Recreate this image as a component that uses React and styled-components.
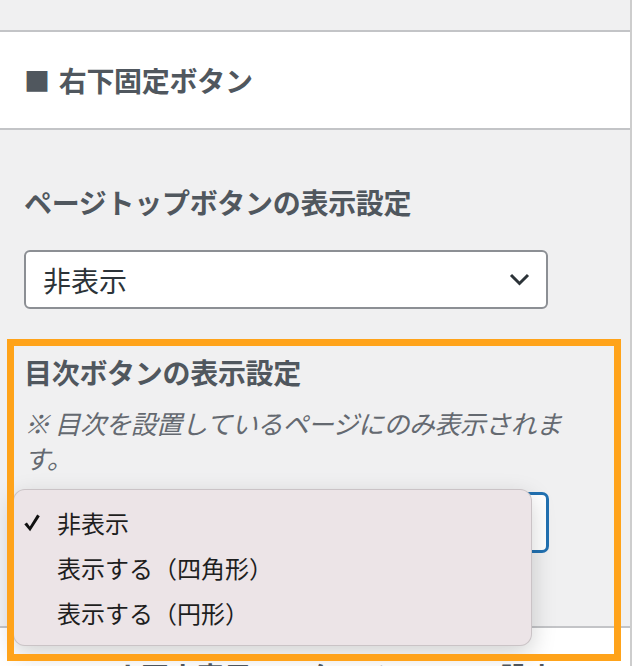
import styled, { createGlobalStyle, css } from 'styled-components';

const GlobalStyle = createGlobalStyle`
  html, body {
    margin: 0;
    padding: 0;
    background: #fff;
  }
  body {
    font-family: "Noto Sans CJK JP", "Noto Sans", sans-serif;
    -webkit-font-smoothing: antialiased;
  }
`;

const Panel = styled.div`
  width: 630px;
  height: 666px;
  overflow: hidden;
  background: #f0f0f1;
  border-right: 2px solid #cdcdcd;
`;

const TopGap = styled.div`
  height: 30px;
`;

const SectionTitle = styled.h3`
  margin: 0;
  height: 96px;
  display: flex;
  align-items: center;
  gap: 9px;
  padding: 0 24px;
  background: #fff;
  border-top: 2px solid #c3c4c7;
  border-bottom: 2px solid #c3c4c7;
  font-size: 28px;
  font-weight: 700;
  letter-spacing: -0.3px;
  color: #50575e;
  white-space: nowrap;
`;

const Marker = styled.span`
  font-size: 26px;
  line-height: 1;
`;

const Controls = styled.div`
  padding: 52px 24px 74px;
  display: flex;
  flex-direction: column;
  gap: 43px;
`;

const Control = styled.div`
  position: relative;
  display: flex;
  flex-direction: column;
  align-items: flex-start;

  ${(p) =>
    p.$highlight &&
    css`
      &::after {
        content: '';
        position: absolute;
        left: -17px;
        right: -15px;
        top: -13px;
        bottom: -109px;
        border: 7px solid #ffa31a;
        z-index: 3;
        pointer-events: none;
      }
    `}
`;

const Label = styled.div`
  font-size: 28px;
  font-weight: 700;
  letter-spacing: -0.3px;
  line-height: 40px;
  color: #50575e;
  margin-bottom: ${(p) => (p.$tight ? '0' : '28px')};
`;

const Note = styled.p`
  margin: 13px 0 18px;
  max-width: 560px;
  font-size: 26px;
  letter-spacing: -0.6px;
  line-height: 35px;
  font-style: italic;
  color: #646970;
`;

const SelectWrap = styled.div`
  position: relative;
  width: 524px;
`;

const SelectBox = styled.div`
  box-sizing: border-box;
  height: 59px;
  display: flex;
  align-items: center;
  justify-content: space-between;
  padding: 0 16px 0 17px;
  background: #fff;
  border: 2px solid ${(p) => (p.$focused ? '#2271b1' : '#8c8f94')};
  box-shadow: ${(p) => (p.$focused ? '0 0 0 1px #2271b1' : 'none')};
  border-radius: 6px;
  font-size: 28px;
  color: #2c3338;
`;

const Menu = styled.div`
  position: absolute;
  left: -11px;
  top: -4px;
  width: 519px;
  box-sizing: border-box;
  padding: 10px 0 10px;
  background: #ece4e7;
  border: 1px solid rgba(0, 0, 0, 0.14);
  border-radius: 12px;
  box-shadow: 0 8px 24px rgba(0, 0, 0, 0.18);
  z-index: 2;
`;

const Option = styled.div`
  display: flex;
  align-items: center;
  height: 45px;
  padding-left: 10px;
  font-size: 24px;
  color: #1e1e1e;
`;

const CheckSlot = styled.span`
  width: 33px;
  display: flex;
  align-items: center;
`;

const Chevron = () => (
  <svg width="21" height="13" viewBox="0 0 21 13">
    <polyline points="2,2 10.5,10.5 19,2" fill="none" stroke="#2c3338" strokeWidth="3" />
  </svg>
);

const CheckMark = () => (
  <svg width="16" height="18" viewBox="0 0 16 18">
    <path d="M0.3 10.2 L2.9 8.4 L5.8 12.4 L13.2 0.6 L15.8 2.2 L6.1 17.2 Z" fill="#111" />
  </svg>
);

const options = ['非表示', '表示する（四角形）', '表示する（円形）'];

const Select = ({ value, focused, open }) => (
  <SelectWrap>
    <SelectBox $focused={focused}>
      <span>{value}</span>
      <Chevron />
    </SelectBox>
    {open && (
      <Menu>
        {options.map((o) => (
          <Option key={o}>
            <CheckSlot>{o === value && <CheckMark />}</CheckSlot>
            {o}
          </Option>
        ))}
      </Menu>
    )}
  </SelectWrap>
);

const App = () => (
  <>
    <GlobalStyle />
    <Panel>
      <TopGap />
      <SectionTitle>
        <Marker>■</Marker>
        右下固定ボタン
      </SectionTitle>
      <Controls>
        <Control>
          <Label>ページトップボタンの表示設定</Label>
          <Select value="非表示" />
        </Control>
        <Control $highlight>
          <Label $tight>目次ボタンの表示設定</Label>
          <Note>※ 目次を設置しているページにのみ表示されます。</Note>
          <Select value="非表示" focused open />
        </Control>
      </Controls>
      <SectionTitle>
        <Marker>■</Marker>
        スマホ固定表示フッターメニューの設定
      </SectionTitle>
    </Panel>
  </>
);

export default App;
